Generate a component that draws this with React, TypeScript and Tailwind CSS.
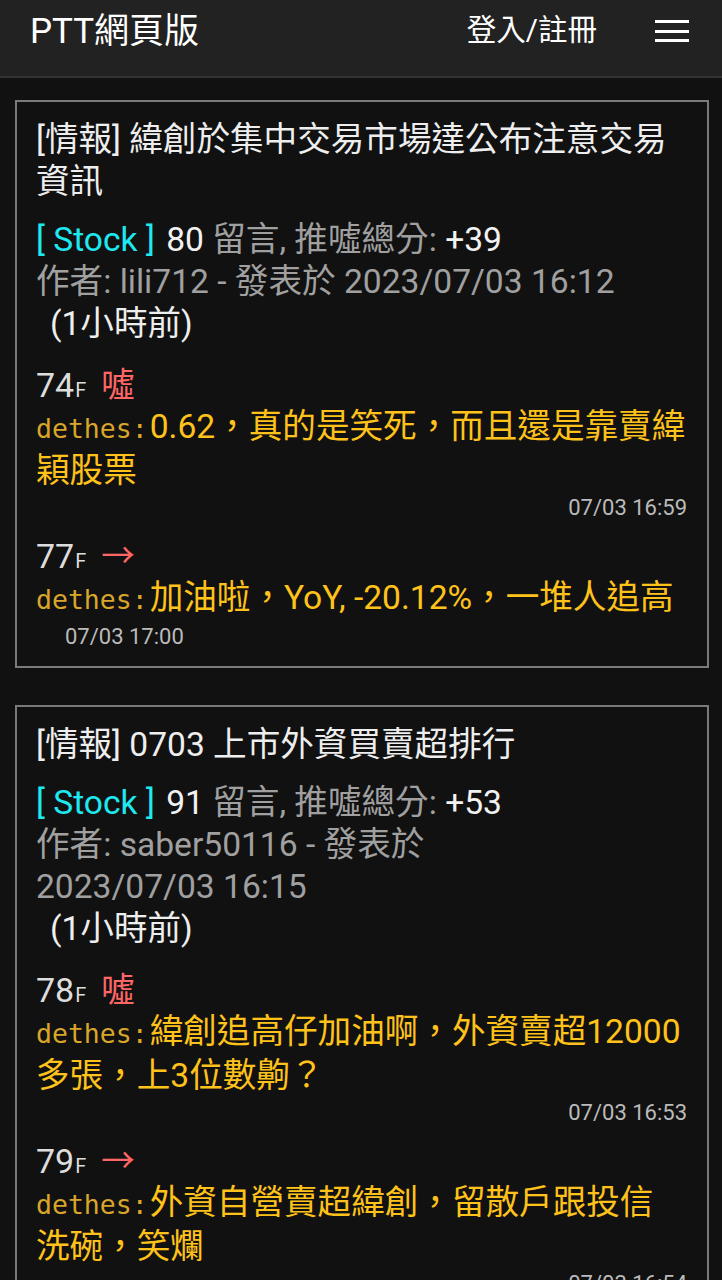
import React from "react";

type Comment = {
  floor: string;
  tag: "噓" | "→" | "推";
  user: string;
  text: string;
  date: string;
  dateLeft?: boolean;
};

type Post = {
  title: string;
  board: string;
  count: string;
  score: string;
  author: string;
  time: string;
  comments: Comment[];
};

const posts: Post[] = [
  {
    title: "[情報] 緯創於集中交易市場達公布注意交易資訊",
    board: "Stock",
    count: "80",
    score: "+39",
    author: "lili712",
    time: "2023/07/03 16:12",
    comments: [
      {
        floor: "74",
        tag: "噓",
        user: "dethes",
        text: "0.62，真的是笑死，而且還是靠賣緯穎股票",
        date: "07/03 16:59",
      },
      {
        floor: "77",
        tag: "→",
        user: "dethes",
        text: "加油啦，YoY, -20.12%，一堆人追高",
        date: "07/03 17:00",
        dateLeft: true,
      },
    ],
  },
  {
    title: "[情報] 0703 上市外資買賣超排行",
    board: "Stock",
    count: "91",
    score: "+53",
    author: "saber50116",
    time: "2023/07/03 16:15",
    comments: [
      {
        floor: "78",
        tag: "噓",
        user: "dethes",
        text: "緯創追高仔加油啊，外資賣超12000多張，上3位數齁？",
        date: "07/03 16:53",
      },
      {
        floor: "79",
        tag: "→",
        user: "dethes",
        text: "外資自營賣超緯創，留散戶跟投信\n洗碗，笑爛",
        date: "07/03 16:54",
      },
    ],
  },
];

const FONT = "font-['Roboto','Noto_Sans_CJK_TC',sans-serif]";

function CommentItem({ c, first }: { c: Comment; first: boolean }) {
  return (
    <div className={first ? "mt-[19px]" : "mt-[13px]"}>
      <div className="flex items-baseline h-[42px] leading-[42px]">
        <span className="text-[34px] text-[#dddddd]">{c.floor}</span>
        <span className="text-[20px] text-[#dddddd] ml-[1px]">F</span>
        <span className="text-[33.6px] text-[#ff6666] ml-[15px]">{c.tag}</span>
      </div>
      <div className="text-[33.6px] leading-[42px] text-[#ffc21a] break-words whitespace-pre-line">
        <span className="font-['DejaVu_Sans_Mono',monospace] text-[26.5px] text-[#d9a62a] mr-[2px]">
          {c.user}:
        </span>
        {c.text}
      </div>
      <div
        className={
          "mt-[2px] h-[28px] leading-[28px] text-[22px] text-[#bbbbbb] " +
          (c.dateLeft ? "pl-[29px] text-left" : "text-right")
        }
      >
        {c.date}
      </div>
    </div>
  );
}

function PostCard({ p }: { p: Post }) {
  return (
    <div className="ml-[15px] mr-[13px] border-2 border-[#7a7a7a] bg-[#111111] pl-[19px] pr-[20px] pt-[17px] pb-[15px]">
      <div className="text-[33.6px] leading-[42px] text-[#eeeeee]">{p.title}</div>
      <div className="mt-[16px] text-[33.6px] leading-[42px]">
        <span className="text-[#1ee8f0]">[ {p.board} ]</span>{" "}
        <span className="text-[#f2f2f2] ml-[3px]">{p.count}</span>{" "}
        <span className="text-[#a0a0a0]">留言, 推噓總分:</span>{" "}
        <span className="text-[#f2f2f2]">{p.score}</span>
      </div>
      <div className="text-[33.6px] leading-[42px] text-[#a0a0a0]">
        作者: {p.author} - 發表於 <span className="whitespace-nowrap">{p.time}</span>
      </div>
      <div className="text-[33.6px] leading-[42px] text-[#eeeeee] pl-[14px]">(1小時前)</div>
      {p.comments.map((c, i) => (
        <CommentItem key={i} c={c} first={i === 0} />
      ))}
    </div>
  );
}

export default function App() {
  return (
    <div className={"min-h-screen bg-[#111111] " + FONT}>
      <header className="h-[78px] bg-[#222222] border-b-2 border-[#333333]">
        <div className="h-[62px] flex items-center pl-[30px] pr-[33px]">
          <div className="text-[35px] text-white leading-none">PTT網頁版</div>
          <div className="ml-auto text-[29.5px] text-white leading-none">登入/註冊</div>
          <button className="ml-[58px] flex flex-col gap-[6.5px]" aria-label="menu">
            <span className="block h-[3px] w-[34px] bg-white" />
            <span className="block h-[3px] w-[34px] bg-white" />
            <span className="block h-[3px] w-[34px] bg-white" />
          </button>
        </div>
      </header>
      <main className="pt-[22px] pb-[38px] flex flex-col gap-[37px]">
        {posts.map((p, i) => (
          <PostCard key={i} p={p} />
        ))}
      </main>
    </div>
  );
}
